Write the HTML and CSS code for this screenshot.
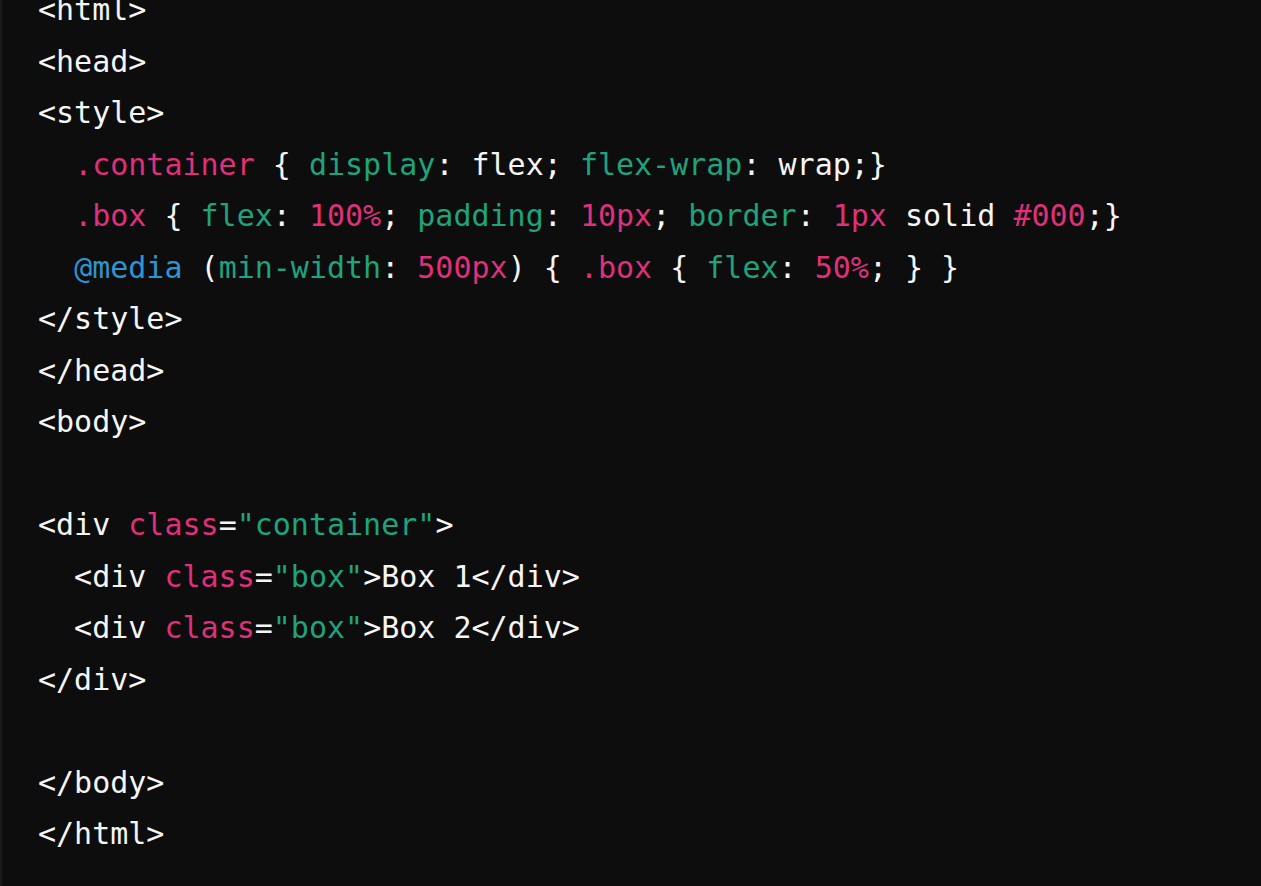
FILE: index.html
```html
<!DOCTYPE html>
<html>
<head>
<meta charset="utf-8">
<link rel="stylesheet" href="styles.css">
</head>
<body>
<div class="code-block">
<pre class="code"><code><span class="t">&lt;html&gt;</span>
<span class="t">&lt;head&gt;</span>
<span class="t">&lt;style&gt;</span>
  <span class="p">.container</span> { <span class="g">display</span>: flex; <span class="g">flex-wrap</span>: wrap;}
  <span class="p">.box</span> { <span class="g">flex</span>: <span class="p">100%</span>; <span class="g">padding</span>: <span class="p">10px</span>; <span class="g">border</span>: <span class="p">1px</span> solid <span class="p">#000</span>;}
  <span class="b">@media</span> (<span class="g">min-width</span>: <span class="p">500px</span>) { <span class="p">.box</span> { <span class="g">flex</span>: <span class="p">50%</span>; } }
&lt;/style&gt;
&lt;/head&gt;
&lt;body&gt;

&lt;div <span class="p">class</span>=<span class="g">"container"</span>&gt;
  &lt;div <span class="p">class</span>=<span class="g">"box"</span>&gt;Box 1&lt;/div&gt;
  &lt;div <span class="p">class</span>=<span class="g">"box"</span>&gt;Box 2&lt;/div&gt;
&lt;/div&gt;

&lt;/body&gt;
&lt;/html&gt;</code></pre>
</div>
</body>
</html>
```

FILE: styles.css
```css
html, body {
  margin: 0;
  padding: 0;
  background: #0d0d0d;
  height: 100%;
  overflow: hidden;
}

.code-block {
  display: flow-root;
  border-left: 2px solid #1b1b1b;
  height: 100%;
  box-sizing: border-box;
}

.code {
  margin: -16px 0 0 0;
  padding: 0 0 0 36px;
  font-family: "DejaVu Sans Mono", "Liberation Mono", monospace;
  font-size: 30px;
  line-height: 51.5px;
  color: #f5f5f5;
  white-space: pre;
}

.p { color: #df3079; }
.g { color: #1fa37d; }
.b { color: #2e95d3; }
```
